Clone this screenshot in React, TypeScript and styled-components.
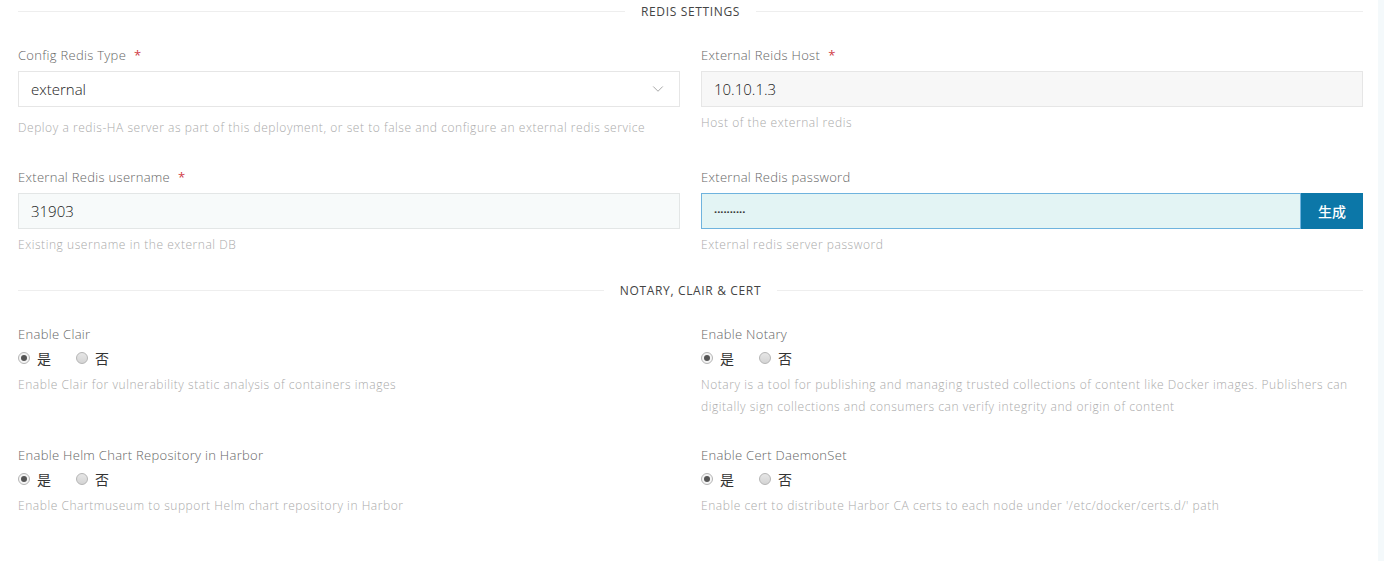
import React from "react";
import styled, { createGlobalStyle } from "styled-components";
import { ChevronDown } from "lucide-react";

const GlobalStyle = createGlobalStyle`
  html, body { margin: 0; padding: 0; background: #fff; }
  body { font-family: "Open Sans", "Noto Sans CJK SC", sans-serif; font-weight: 300; }
  * { box-sizing: border-box; }
`;

const Shell = styled.div`
  display: flex;
  width: 1384px;
  min-height: 561px;
`;

const Page = styled.div`
  flex: 1;
  padding: 0 15px 0 18px;
`;

const ScrollTrack = styled.div`
  width: 6px;
  background: #f4f9fb;
`;

const SectionTitle = styled.div<{ $gap?: number }>`
  display: flex;
  align-items: center;
  gap: 16px;
  height: 22px;
  margin-top: ${(p) => p.$gap ?? 0}px;
  font-size: 12px;
  font-weight: 400;
  color: #444;
  letter-spacing: 0.65px;
  text-transform: uppercase;
  &::before, &::after {
    content: "";
    flex: 1;
    height: 1px;
    background: #eeeeee;
  }
`;

const Grid = styled.div<{ $rowGap: number }>`
  display: grid;
  grid-template-columns: 1fr 1fr;
  column-gap: 21px;
  row-gap: ${(p) => p.$rowGap}px;
  margin-top: 23px;
`;

const Field = styled.div`
  display: flex;
  flex-direction: column;
  min-width: 0;
`;

const Label = styled.div`
  font-size: 13px;
  line-height: 20px;
  font-weight: 300;
  color: #666;
  letter-spacing: 0.3px;
`;

const Star = styled.span`
  color: #d04048;
  margin-left: 8px;
  font-weight: 400;
`;

const InputRow = styled.div<{ $extra?: number }>`
  display: flex;
  margin-top: 6px;
  margin-bottom: ${(p) => p.$extra ?? 0}px;
`;

const InputBox = styled.div<{ $bg: string; $border: string }>`
  flex: 1;
  height: 36px;
  display: flex;
  align-items: center;
  justify-content: space-between;
  padding: 0 12px;
  background: ${(p) => p.$bg};
  border: 1px solid ${(p) => p.$border};
  font-size: 15px;
  font-weight: 300;
  color: #222;
`;

const Dots = styled.span`
  font-size: 11px;
  color: #333;
  font-weight: 700;
`;

const GenButton = styled.button`
  width: 62px;
  height: 36px;
  border: none;
  background: #0c77a8;
  color: #fff;
  font-family: "Noto Sans CJK SC", sans-serif;
  font-size: 14px;
  font-weight: 500;
  cursor: pointer;
`;

const Help = styled.div<{ $mt: number }>`
  margin-top: ${(p) => p.$mt}px;
  font-size: 12px;
  line-height: 22px;
  font-weight: 300;
  letter-spacing: 0.55px;
  color: #aaa;
`;

const RadioRow = styled.div`
  display: flex;
  align-items: center;
  gap: 25px;
  height: 20px;
  margin-top: 4px;
`;

const RadioItem = styled.label`
  display: flex;
  align-items: center;
  gap: 7px;
  font-family: "Noto Sans CJK SC", sans-serif;
  font-size: 14px;
  font-weight: 400;
  color: #333;
`;

const RadioDot = styled.span<{ $on: boolean }>`
  width: 12px;
  height: 12px;
  border-radius: 50%;
  border: 1px solid #b5b5b5;
  background: ${(p) => (p.$on ? "#f4f4f4" : "linear-gradient(#e6e6e6, #d4d4d4)")};
  display: flex;
  align-items: center;
  justify-content: center;
  &::after {
    content: "";
    width: 6px;
    height: 6px;
    border-radius: 50%;
    background: ${(p) => (p.$on ? "#555" : "transparent")};
  }
`;

const Radios = () => (
  <RadioRow>
    <RadioItem>
      <RadioDot $on />是
    </RadioItem>
    <RadioItem>
      <RadioDot $on={false} />否
    </RadioItem>
  </RadioRow>
);

const ToggleField = ({ label, help }: { label: string; help: string }) => (
  <Field>
    <Label>{label}</Label>
    <Radios />
    <Help $mt={6}>{help}</Help>
  </Field>
);

export default function App() {
  return (
    <>
      <GlobalStyle />
      <Shell>
        <Page>
          <SectionTitle>Redis Settings</SectionTitle>
          <Grid $rowGap={28}>
            <Field>
              <Label>
                Config Redis Type<Star>*</Star>
              </Label>
              <InputRow $extra={5}>
                <InputBox $bg="#ffffff" $border="#e6e6e6">
                  external
                  <ChevronDown size={18} strokeWidth={1} color="#8a8a8a" />
                </InputBox>
              </InputRow>
              <Help $mt={5}>
                Deploy a redis-HA server as part of this deployment, or set to false and configure an external redis service
              </Help>
            </Field>
            <Field>
              <Label>
                External Reids Host<Star>*</Star>
              </Label>
              <InputRow>
                <InputBox $bg="#f7f7f7" $border="#e6e6e6">10.10.1.3</InputBox>
              </InputRow>
              <Help $mt={5}>Host of the external redis</Help>
            </Field>
            <Field>
              <Label>
                External Redis username<Star>*</Star>
              </Label>
              <InputRow>
                <InputBox $bg="#f7fafa" $border="#e3e6e6">31903</InputBox>
              </InputRow>
              <Help $mt={5}>Existing username in the external DB</Help>
            </Field>
            <Field>
              <Label>External Redis password</Label>
              <InputRow>
                <InputBox $bg="#e3f4f4" $border="#6fb3de">
                  <Dots>··········</Dots>
                </InputBox>
                <GenButton>生成</GenButton>
              </InputRow>
              <Help $mt={5}>External redis server password</Help>
            </Field>
          </Grid>
          <SectionTitle $gap={23}>Notary, Clair &amp; Cert</SectionTitle>
          <Grid $rowGap={27}>
            <ToggleField
              label="Enable Clair"
              help="Enable Clair for vulnerability static analysis of containers images"
            />
            <ToggleField
              label="Enable Notary"
              help="Notary is a tool for publishing and managing trusted collections of content like Docker images. Publishers can digitally sign collections and consumers can verify integrity and origin of content"
            />
            <ToggleField
              label="Enable Helm Chart Repository in Harbor"
              help="Enable Chartmuseum to support Helm chart repository in Harbor"
            />
            <ToggleField
              label="Enable Cert DaemonSet"
              help="Enable cert to distribute Harbor CA certs to each node under '/etc/docker/certs.d/' path"
            />
          </Grid>
        </Page>
        <ScrollTrack />
      </Shell>
    </>
  );
}
